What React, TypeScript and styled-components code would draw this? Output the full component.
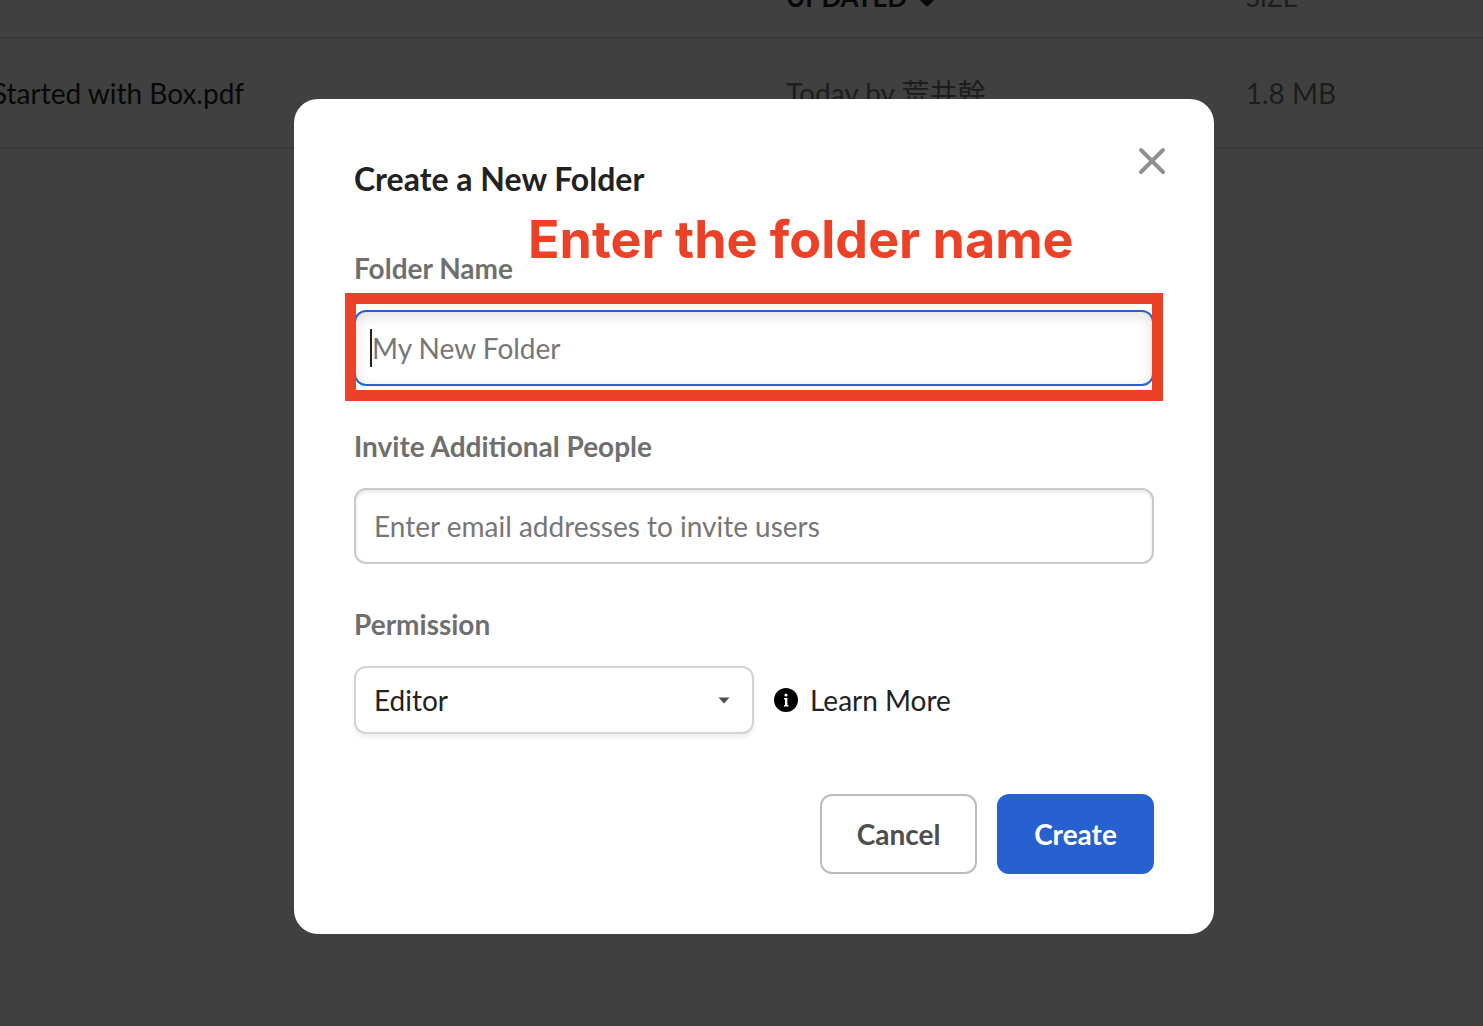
import React from "react";
import styled, { createGlobalStyle } from "styled-components";

const GlobalStyle = createGlobalStyle`
  *, *::before, *::after { box-sizing: border-box; }
  body {
    margin: 0;
    background: #fff;
    color: #222;
    font-family: Lato, "Noto Sans CJK JP", sans-serif;
    font-size: 28px;
    line-height: 40px;
  }
  button, input, select { font: inherit; color: inherit; margin: 0; }
`;

const Page = styled.div`
  position: relative;
  min-height: 100vh;
  overflow: hidden;
`;

/* The file list is scrolled, so its header is partly out of view. */
const FileTable = styled.table`
  width: 100%;
  margin-top: -40px;
  border-collapse: collapse;
  table-layout: fixed;
`;

const HeadCell = styled.th<{ $width?: string; $active?: boolean }>`
  width: ${(p) => p.$width ?? "auto"};
  height: 78px;
  padding: 0 0 4px;
  border-bottom: 2px solid #e8e8e8;
  color: ${(p) => (p.$active ? "#222" : "#767676")};
  font-size: 26px;
  font-weight: ${(p) => (p.$active ? 700 : 400)};
  text-align: left;
  text-transform: uppercase;
`;

const SortArrow = styled.svg`
  margin-left: 12px;
`;

const Cell = styled.td<{ $muted?: boolean }>`
  height: 110px;
  padding: 0;
  border-bottom: 2px solid #e8e8e8;
  color: ${(p) => (p.$muted ? "#767676" : "#222")};
  white-space: nowrap;
`;

const FileName = styled.span`
  margin-left: -8px;
`;

const Overlay = styled.div`
  position: absolute;
  inset: 0;
  display: flex;
  align-items: flex-start;
  justify-content: center;
  padding: 99px 0 92px 25px;
  background: rgba(0, 0, 0, 0.75);
`;

const Modal = styled.form`
  position: relative;
  display: flex;
  flex-direction: column;
  width: 100%;
  max-width: 920px;
  padding: 60px;
  border-radius: 24px;
  background: #fff;
`;

const Title = styled.h1`
  margin: 0 0 49px;
  font-size: 32px;
  font-weight: 700;
  line-height: 40px;
`;

const CloseButton = styled.button`
  position: absolute;
  top: 40px;
  right: 40px;
  display: grid;
  place-items: center;
  width: 44px;
  height: 44px;
  padding: 0;
  border: 0;
  background: none;
`;

const Fields = styled.div`
  display: flex;
  flex-direction: column;
  gap: 40px;
`;

const Field = styled.div`
  display: flex;
  flex-direction: column;
  gap: 22px;
`;

const Label = styled.label`
  color: #6f6f6f;
  font-weight: 700;
`;

const InputWrap = styled.div`
  position: relative;
  display: flex;
`;

const TextInput = styled.input<{ $active?: boolean }>`
  width: 100%;
  height: 76px;
  padding: 0 ${(p) => (p.$active ? "16px" : "18px")};
  border: 2px solid ${(p) => (p.$active ? "#2761d0" : "#c9c9c9")};
  border-radius: 12px;
  outline: none;
  background: #fff;
  box-shadow: ${(p) =>
    p.$active
      ? "inset 0 4px 14px rgba(0, 0, 0, 0.12)"
      : "inset 0 2px 4px rgba(0, 0, 0, 0.1)"};

  &::placeholder {
    color: #767676;
    opacity: 1;
  }
`;

const Caret = styled.span`
  position: absolute;
  top: 19px;
  left: 16px;
  width: 2px;
  height: 38px;
  background: #222;
`;

const Highlight = styled.div`
  position: absolute;
  inset: -17px -9px -15px;
  border: 11px solid #ec4126;
  pointer-events: none;
`;

const Note = styled.p`
  position: absolute;
  bottom: 100%;
  left: 174px;
  margin: 0 0 38px;
  color: #ec4126;
  font-family: Inter, "Liberation Sans", sans-serif;
  font-size: 52px;
  font-weight: 700;
  line-height: 64px;
  white-space: nowrap;
`;

const PermissionRow = styled.div`
  display: flex;
  align-items: center;
  gap: 20px;
`;

const SelectWrap = styled.div`
  position: relative;
  flex: 0 1 400px;
`;

const Select = styled.select`
  display: block;
  width: 100%;
  height: 68px;
  padding: 0 60px 0 18px;
  border: 2px solid #d3d3d3;
  border-radius: 12px;
  appearance: none;
  background: #fff;
  box-shadow: 0 4px 4px rgba(0, 0, 0, 0.06);
`;

const SelectArrow = styled.svg`
  position: absolute;
  top: 31px;
  right: 24px;
  pointer-events: none;
`;

const LearnMore = styled.a`
  display: flex;
  align-items: center;
  gap: 12px;
  color: #222;
  text-decoration: none;
`;

const Actions = styled.div`
  display: flex;
  justify-content: flex-end;
  gap: 20px;
  margin-top: 60px;
`;

const Button = styled.button<{ $primary?: boolean }>`
  min-width: 157px;
  height: 80px;
  padding: 0 30px;
  border: 2px solid ${(p) => (p.$primary ? "#2761d0" : "#bcbcbc")};
  border-radius: 12px;
  background: ${(p) => (p.$primary ? "#2761d0" : "#fff")};
  color: ${(p) => (p.$primary ? "#fff" : "#4e4e4e")};
  font-weight: 700;
`;

export default function App() {
  return (
    <Page>
      <GlobalStyle />
      <FileTable>
        <thead>
          <tr>
            <HeadCell $width="53%" aria-label="Name" />
            <HeadCell $width="31%" $active>
              Updated
              <SortArrow width="16" height="10" viewBox="0 0 16 10" aria-hidden="true">
                <path d="M2 2l6 6 6-6z" fill="#222" stroke="#222" strokeWidth="3" strokeLinejoin="round" />
              </SortArrow>
            </HeadCell>
            <HeadCell>Size</HeadCell>
          </tr>
        </thead>
        <tbody>
          <tr>
            <Cell>
              <FileName>Started with Box.pdf</FileName>
            </Cell>
            <Cell $muted>Today by 荒井幹</Cell>
            <Cell $muted>1.8 MB</Cell>
          </tr>
        </tbody>
      </FileTable>

      <Overlay>
        <Modal role="dialog" aria-labelledby="dialog-title" onSubmit={(e) => e.preventDefault()}>
          <Title id="dialog-title">Create a New Folder</Title>
          <CloseButton type="button" aria-label="Close">
            <svg width="28" height="28" viewBox="0 0 28 28" aria-hidden="true">
              <path d="M3 3l22 22M25 3L3 25" stroke="#909090" strokeWidth="4" strokeLinecap="round" />
            </svg>
          </CloseButton>

          <Fields>
            <Field>
              <Label htmlFor="folder-name">Folder Name</Label>
              <InputWrap>
                <TextInput id="folder-name" type="text" placeholder="My New Folder" $active />
                <Caret />
                <Highlight />
                <Note>Enter the folder name</Note>
              </InputWrap>
            </Field>

            <Field>
              <Label htmlFor="invitees">Invite Additional People</Label>
              <TextInput id="invitees" type="text" placeholder="Enter email addresses to invite users" />
            </Field>

            <Field>
              <Label htmlFor="permission">Permission</Label>
              <PermissionRow>
                <SelectWrap>
                  <Select id="permission" defaultValue="editor">
                    <option value="editor">Editor</option>
                  </Select>
                  <SelectArrow width="12" height="7" viewBox="0 0 12 7" aria-hidden="true">
                    <path d="M0.5 0.5h11L6 6.5z" fill="#4e4e4e" />
                  </SelectArrow>
                </SelectWrap>
                <LearnMore href="#permissions">
                  <svg width="24" height="24" viewBox="0 0 24 24" aria-hidden="true">
                    <circle cx="12" cy="12" r="12" fill="#000" />
                    <circle cx="12" cy="7" r="1.6" fill="#fff" />
                    <path d="M10 10h3.4v7h1v1.4h-4.4v-1.4h1v-5.6h-1z" fill="#fff" />
                  </svg>
                  Learn More
                </LearnMore>
              </PermissionRow>
            </Field>
          </Fields>

          <Actions>
            <Button type="button">Cancel</Button>
            <Button type="submit" $primary>
              Create
            </Button>
          </Actions>
        </Modal>
      </Overlay>
    </Page>
  );
}
